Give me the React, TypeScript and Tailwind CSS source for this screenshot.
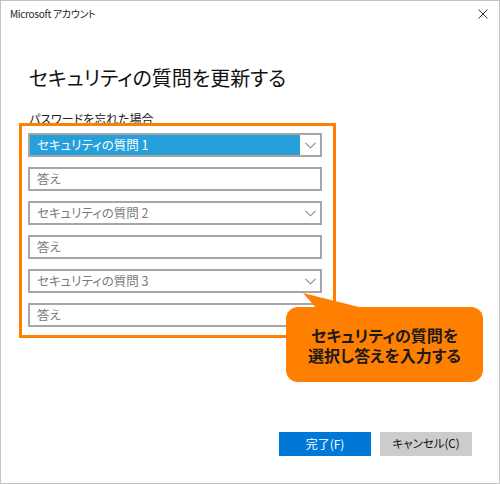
const font = '"Noto Sans CJK JP", "Noto Sans", sans-serif';

function Chevron({ color }: { color: string }) {
    return (
        <svg width="11" height="7" viewBox="0 0 11 7" fill="none">
            <path d="M0.5 0.8 L5.5 5.8 L10.5 0.8" stroke={color} strokeWidth="1.1" />
        </svg>
    );
}

function SelectBox({ label, active }: { label: string; active?: boolean }) {
    return (
        <div className="flex h-[24px] w-[294px] border-2 border-[#a6a6a6] bg-white">
            <div
                className={`flex flex-1 items-center pl-[7px] text-[12.5px] ${active ? 'bg-[#26a0da] text-white' : 'text-[#7a7a7a]'}`}
            >
                {label}
            </div>
            <div className="flex w-[20px] items-center justify-center bg-white">
                <Chevron color="#8a8a8a" />
            </div>
        </div>
    );
}

function AnswerBox() {
    return (
        <div className="flex h-[24px] w-[294px] items-center border-2 border-[#a6a6a6] bg-white pl-[7px] text-[12.5px] text-[#7a7a7a]">
            答え
        </div>
    );
}

export default function App() {
    return (
        <div
            className="relative flex h-[484px] w-[500px] flex-col border border-[#c4c4c4] bg-white text-black [font-feature-settings:'palt']"
            style={{ fontFamily: font }}
        >
            {/* Title bar */}
            <div className="flex h-[25px] items-center justify-between pl-[9px] pr-[11px]">
                <span className="text-[10px] tracking-[-0.3px] text-[#222]">Microsoft アカウント</span>
                <svg width="10" height="10" viewBox="0 0 10 10">
                    <path d="M0.5 0.5 L9.5 9.5 M9.5 0.5 L0.5 9.5" stroke="#333" strokeWidth="1" />
                </svg>
            </div>

            {/* Heading */}
            <h1 className="ml-[28px] mt-[38px] text-[20px] leading-[28px] font-normal text-[#111]">
                セキュリティの質問を更新する
            </h1>
            <p className="-mb-[2px] ml-[28px] mt-[20px] text-[12px] leading-[13px] text-[#222]">
                パスワードを忘れた場合
            </p>

            {/* Highlighted question area */}
            <div className="ml-[18px] flex w-[317px] flex-col gap-[10px] border-[3px] border-[#ff8000] pb-[8px] pl-[6px] pt-[7px]">
                <SelectBox label="セキュリティの質問 1" active />
                <AnswerBox />
                <SelectBox label="セキュリティの質問 2" />
                <AnswerBox />
                <SelectBox label="セキュリティの質問 3" />
                <AnswerBox />
            </div>

            {/* Buttons */}
            <div className="mb-[27px] mr-[27px] mt-auto flex justify-end gap-[9px]">
                <button className="h-[24px] w-[92px] bg-[#0078d7] text-[12px] text-white">完了(F)</button>
                <button className="h-[24px] w-[92px] bg-[#cccccc] text-[11.5px] text-[#111]">キャンセル(C)</button>
            </div>

            {/* Callout */}
            <div className="absolute left-[285px] top-[306px] flex h-[75px] w-[197px] flex-col items-center justify-center rounded-[12px] bg-[#ff8000] text-[16px] font-bold leading-[20px] text-[#1a1a1a]">
                <svg className="absolute left-0 top-[-14px]" width="90" height="16" viewBox="0 0 90 16">
                    <polygon points="17,0 31,16 81,16" fill="#ff8000" />
                </svg>
                <span className="block h-[20px]">セキュリティの質問を</span>
                <span className="block h-[20px]">選択し答えを入力する</span>
            </div>
        </div>
    );
}
